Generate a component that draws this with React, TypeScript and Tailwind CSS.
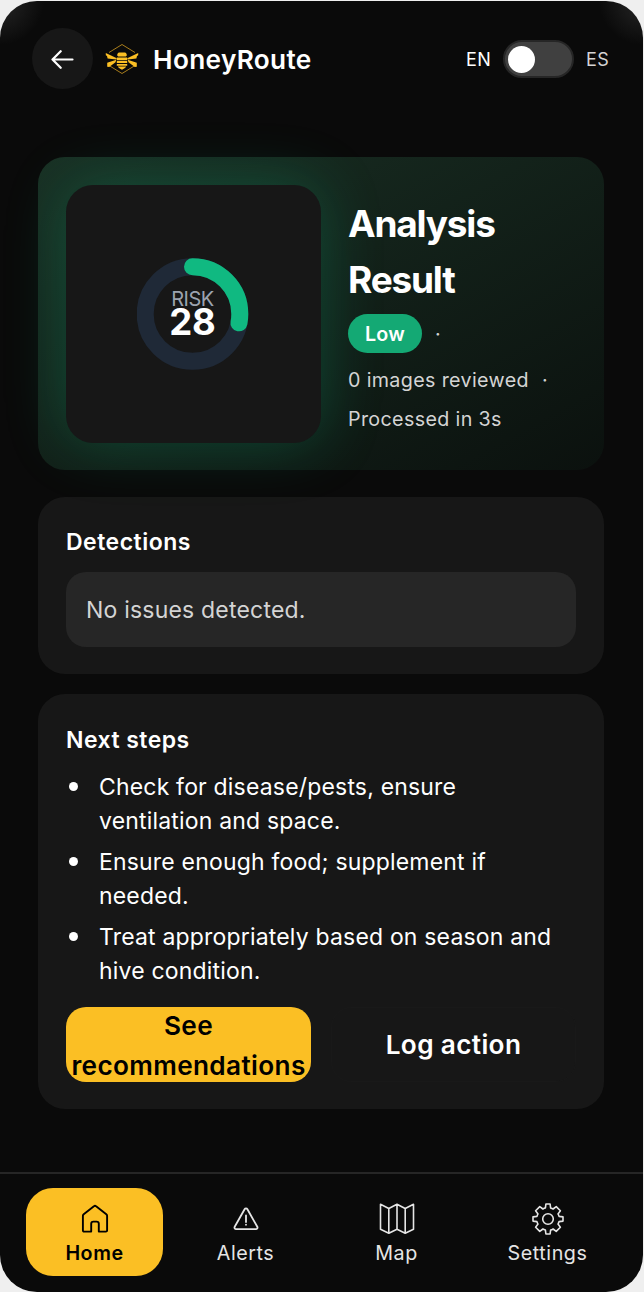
import React from "react";

const steps = [
  "Check for disease/pests, ensure ventilation and space.",
  "Ensure enough food; supplement if needed.",
  "Treat appropriately based on season and hive condition.",
];

function BeeLogo() {
  return (
    <svg width="34" height="32" viewBox="0 0 34 32" fill="none" className="shrink-0">
      <path d="M4 9.500 17 1.500l13 8M4 22.500l13 8 13-8" stroke="#a87d1c" strokeWidth="1" />
      <path d="M12.200 12.500c-.2-1.800.8-2.800 2-3.100h5.600c1.200.3 2.200 1.300 2 3.100l-1 1.100h-7.600Z" fill="#fbbf24" />
      <path d="M11.800 14.600h10.400v2.600H11.800zM11.800 18.100h10.400v2H11.800zM11.800 21h10.400v1.800H11.800zM12.800 23.500h8.400c-.7 1.400-2.300 1.900-4.200 3.300-1.900-1.400-3.500-1.900-4.200-3.300Z" fill="#fbbf24" />
      <path d="M11.800 15.300 0.800 10v2.200l1.200.8.6 2.600 8.600.8ZM22.200 15.300 33.200 10v2.200l-1.200.8-.6 2.600-8.600.8ZM11.300 16.700 2.200 19.800v4l2 .2 6.300-4.700ZM22.700 16.700l9.100 3.100v4l-2 .2-6.300-4.700Z" fill="#fbbf24" />
    </svg>
  );
}

function HomeIcon() {
  return (
    <svg width="28" height="30" viewBox="0 0 28 30" fill="none" stroke="#000" strokeWidth="1.900" strokeLinejoin="round">
      <path d="M1.900 11.800c0-.7.300-1.200.8-1.600L12.900 2.200a1.700 1.700 0 0 1 2.200 0L25.300 10.200c.5.400.8.900.8 1.600v14.600c0 .7-.5 1.200-1.200 1.200h-7.100v-7.800a2.200 2.200 0 0 0-2.200-2.200h-3.200a2.200 2.200 0 0 0-2.200 2.200v7.800H3.100c-.7 0-1.200-.5-1.200-1.200Z" />
    </svg>
  );
}

function AlertIcon() {
  return (
    <svg width="28" height="30" viewBox="0 0 28 30" fill="none" stroke="#e5e5e5" strokeWidth="1.800" strokeLinejoin="round" strokeLinecap="round">
      <path d="M12.600 5.300a1.600 1.600 0 0 1 2.800 0l9.900 17.500a1.600 1.600 0 0 1-1.400 2.400H4.100a1.600 1.600 0 0 1-1.400-2.400Z" />
      <path d="M14 11.500v6.500M14 20.600v.2" />
    </svg>
  );
}

function MapIcon() {
  return (
    <svg width="36" height="34" viewBox="0 0 36 34" fill="none" stroke="#e5e5e5" strokeWidth="1.600" strokeLinejoin="round">
      <path d="M1.500 2.300 9.800 6.500 18 2.300 26.200 6.500l8.300-4.200v25l-8.300 4-8.200-4-8.200 4-8.300-4ZM9.800 6.500v24.800M18 2.300v25M26.200 6.500v24.800" />
    </svg>
  );
}

function SettingsIcon() {
  return (
    <svg width="32" height="32" viewBox="0 0 32 32" fill="none" stroke="#e5e5e5" strokeWidth="1.600" strokeLinejoin="round">
      <path d="M13.900 1h4.200l.5 3.900c.9.300 1.700.6 2.500 1.100l3.100-2.400 4.200 4.200L26 10.900c.5.800.9 1.600 1.100 2.500l3.900.5v4.200l-3.900.5c-.3.900-.6 1.700-1.100 2.500l2.400 3.100-4.200 4.200-3.100-2.400c-.8.500-1.600.9-2.500 1.100l-.5 3.900h-4.200l-.5-3.900c-.9-.3-1.700-.6-2.500-1.100l-3.100 2.400-4.200-4.200L6 21.100c-.5-.8-.9-1.600-1.100-2.500L1 18.100v-4.200l3.900-.5c.3-.9.600-1.700 1.100-2.500L3.600 7.800l4.200-4.200L10.900 6c.8-.5 1.600-.9 2.500-1.100Z" />
      <circle cx="16" cy="16" r="5.300" />
    </svg>
  );
}

function RiskRing() {
  return (
    <div className="relative mr-[2px] h-[112px] w-[112px]">
      <svg width="112" height="112" viewBox="0 0 112 112" fill="none" strokeWidth="17">
        <circle cx="55.500" cy="56" r="47.300" stroke="#1f2937" />
        <circle cx="55.500" cy="56" r="47.300" stroke="#10b981" pathLength="100" strokeDasharray="28 100" strokeLinecap="round" transform="rotate(-90 55.500 56)" />
      </svg>
      <div className="absolute inset-0 flex flex-col items-center pt-[31px]">
        <span className="text-[20px] leading-[20px] tracking-[-0.500px] text-[#9ca3af]">RISK</span>
        <span className="text-[36.500px] leading-[26px] font-bold text-white">28</span>
      </div>
    </div>
  );
}

const tabs = [
  { label: "Home", icon: <HomeIcon />, active: true },
  { label: "Alerts", icon: <AlertIcon />, active: false },
  { label: "Map", icon: <MapIcon />, active: false },
  { label: "Settings", icon: <SettingsIcon />, active: false },
];

export default function App() {
  return (
    <div className="h-[1292px] w-[644px] bg-[#efefef] pt-px font-['Inter','Liberation_Sans',sans-serif] text-white">
      <div className="flex h-[1291px] w-[643px] flex-col overflow-hidden rounded-[37px] bg-[#0a0a0a] bg-[radial-gradient(circle_at_0_0,#262626_0,#0a0a0a_44px,transparent_45px),radial-gradient(circle_at_100%_0,#262626_0,#0a0a0a_44px,transparent_45px)]">
        <header className="flex h-[115px] items-center justify-between pr-[34px] pl-[32px]">
          <div className="flex items-center">
            <button className="flex size-[61px] items-center justify-center rounded-full bg-[#171717]">
              <svg width="24" height="20" viewBox="0 0 24 20" fill="none" stroke="#fff" strokeWidth="2.200" strokeLinecap="round" strokeLinejoin="round">
                <path d="M21.500 10.500H1.500M9.700 2.200 1.500 10.500l8.200 8.300" />
              </svg>
            </button>
            <div className="ml-[12px] pt-px"><BeeLogo /></div>
            <h1 className="ml-[14px] pt-[3px] text-[26.200px] leading-10 font-semibold tracking-[0.350px]">HoneyRoute</h1>
          </div>
          <div className="flex items-center pt-px text-[18px] tracking-[0.300px]">
            <span>EN</span>
            <button className="mx-[12px] flex h-[38px] w-[71px] items-center rounded-full border-2 border-[#262626] bg-[#404040] pl-[3px]">
              <span className="size-[27px] rounded-full bg-white" />
            </button>
            <span className="text-[#d4d4d4]">ES</span>
          </div>
        </header>

        <main className="flex flex-col px-[38px] pt-[41px]">
          <section className="relative flex h-[313px] w-[566px] rounded-[27px] bg-linear-to-br from-[#193024] to-[#0b110e] p-[28px]">
            <div className="flex h-[258px] w-[255px] shrink-0 items-center justify-center rounded-[27px] bg-[#171717] shadow-[0_0_60px_rgba(16,185,129,0.28)]">
              <RiskRing />
            </div>
            <div className="ml-[27px] flex flex-col pt-[11px]">
              <h2 className="text-[37px] leading-[56px] font-bold tracking-[-1.200px]">Analysis<br />Result</h2>
              <div className="mt-[6px] text-[19.700px] leading-[39px] tracking-[0.350px] text-[#d4d4d4]">
                <div className="flex h-[39px] items-center">
                  <span className="flex h-[39px] items-center rounded-full bg-[#14a974] px-[17px] pt-[2px] font-semibold tracking-[0.200px] text-white">Low</span>
                  <span className="ml-[13px] pt-[2px]">·</span>
                </div>
                <div className="mt-[8px] flex gap-[13px]"><span>0 images reviewed</span><span>·</span></div>
                <div>Processed in 3s</div>
              </div>
            </div>
          </section>

          <section className="mt-[27px] h-[177px] w-[566px] rounded-[27px] bg-[#171717] px-[28px] pt-[28px]">
            <h3 className="text-[23px] leading-[34px] font-semibold tracking-[0.500px]">Detections</h3>
            <div className="mt-[13px] flex h-[75px] w-[510px] items-center rounded-[20px] bg-[#262626] px-[20px] pt-[2px] text-[23px] tracking-[0.200px] text-[#d4d4d4]">
              No issues detected.
            </div>
          </section>

          <section className="mt-[20px] h-[415px] w-[566px] rounded-[27px] bg-[#171717] px-[28px] pt-[29px]">
            <h3 className="text-[23px] leading-[34px] font-semibold tracking-[0.450px]">Next steps</h3>
            <ul className="mt-[13px] flex flex-col gap-[7px] text-[23px] leading-[34px] tracking-[0.180px]">
              {steps.map((step) => (
                <li key={step} className="flex">
                  <span className="mt-[12px] ml-[3px] size-[9px] shrink-0 rounded-full bg-white" />
                  <span className="ml-[21px] w-[465px]">{step}</span>
                </li>
              ))}
            </ul>
            <div className="mt-[19px] flex gap-[20px] text-[26.200px] leading-[40px] font-semibold tracking-[0.350px]">
              <button className="flex h-[75px] w-[245px] items-center justify-center rounded-[20px] bg-[#fbbf24] text-black">
                <span className="pt-[3px] text-center">See<br />recommendations</span>
              </button>
              <button className="h-[75px] w-[245px] rounded-[20px] border border-[#191919]">Log action</button>
            </div>
          </section>
        </main>

        <nav className="mt-[63px] grid h-[119px] grid-cols-4 gap-x-[14px] border-t-2 border-[#262626] pt-[14px] pr-[27px] pl-[26px]">
          {tabs.map((tab) => (
            <button
              key={tab.label}
              className={
                tab.active
                  ? "flex h-[88px] flex-col items-center rounded-[27px] bg-[#fbbf24] pt-[14px] font-semibold text-black"
                  : "flex h-[88px] flex-col items-center rounded-[27px] pt-[14px] text-[#e5e5e5]"
              }
            >
              <span className="flex h-[34px] items-center">{tab.icon}</span>
              <span className="text-[19.700px] leading-[34px] tracking-[0.550px]">{tab.label}</span>
            </button>
          ))}
        </nav>
      </div>
    </div>
  );
}
